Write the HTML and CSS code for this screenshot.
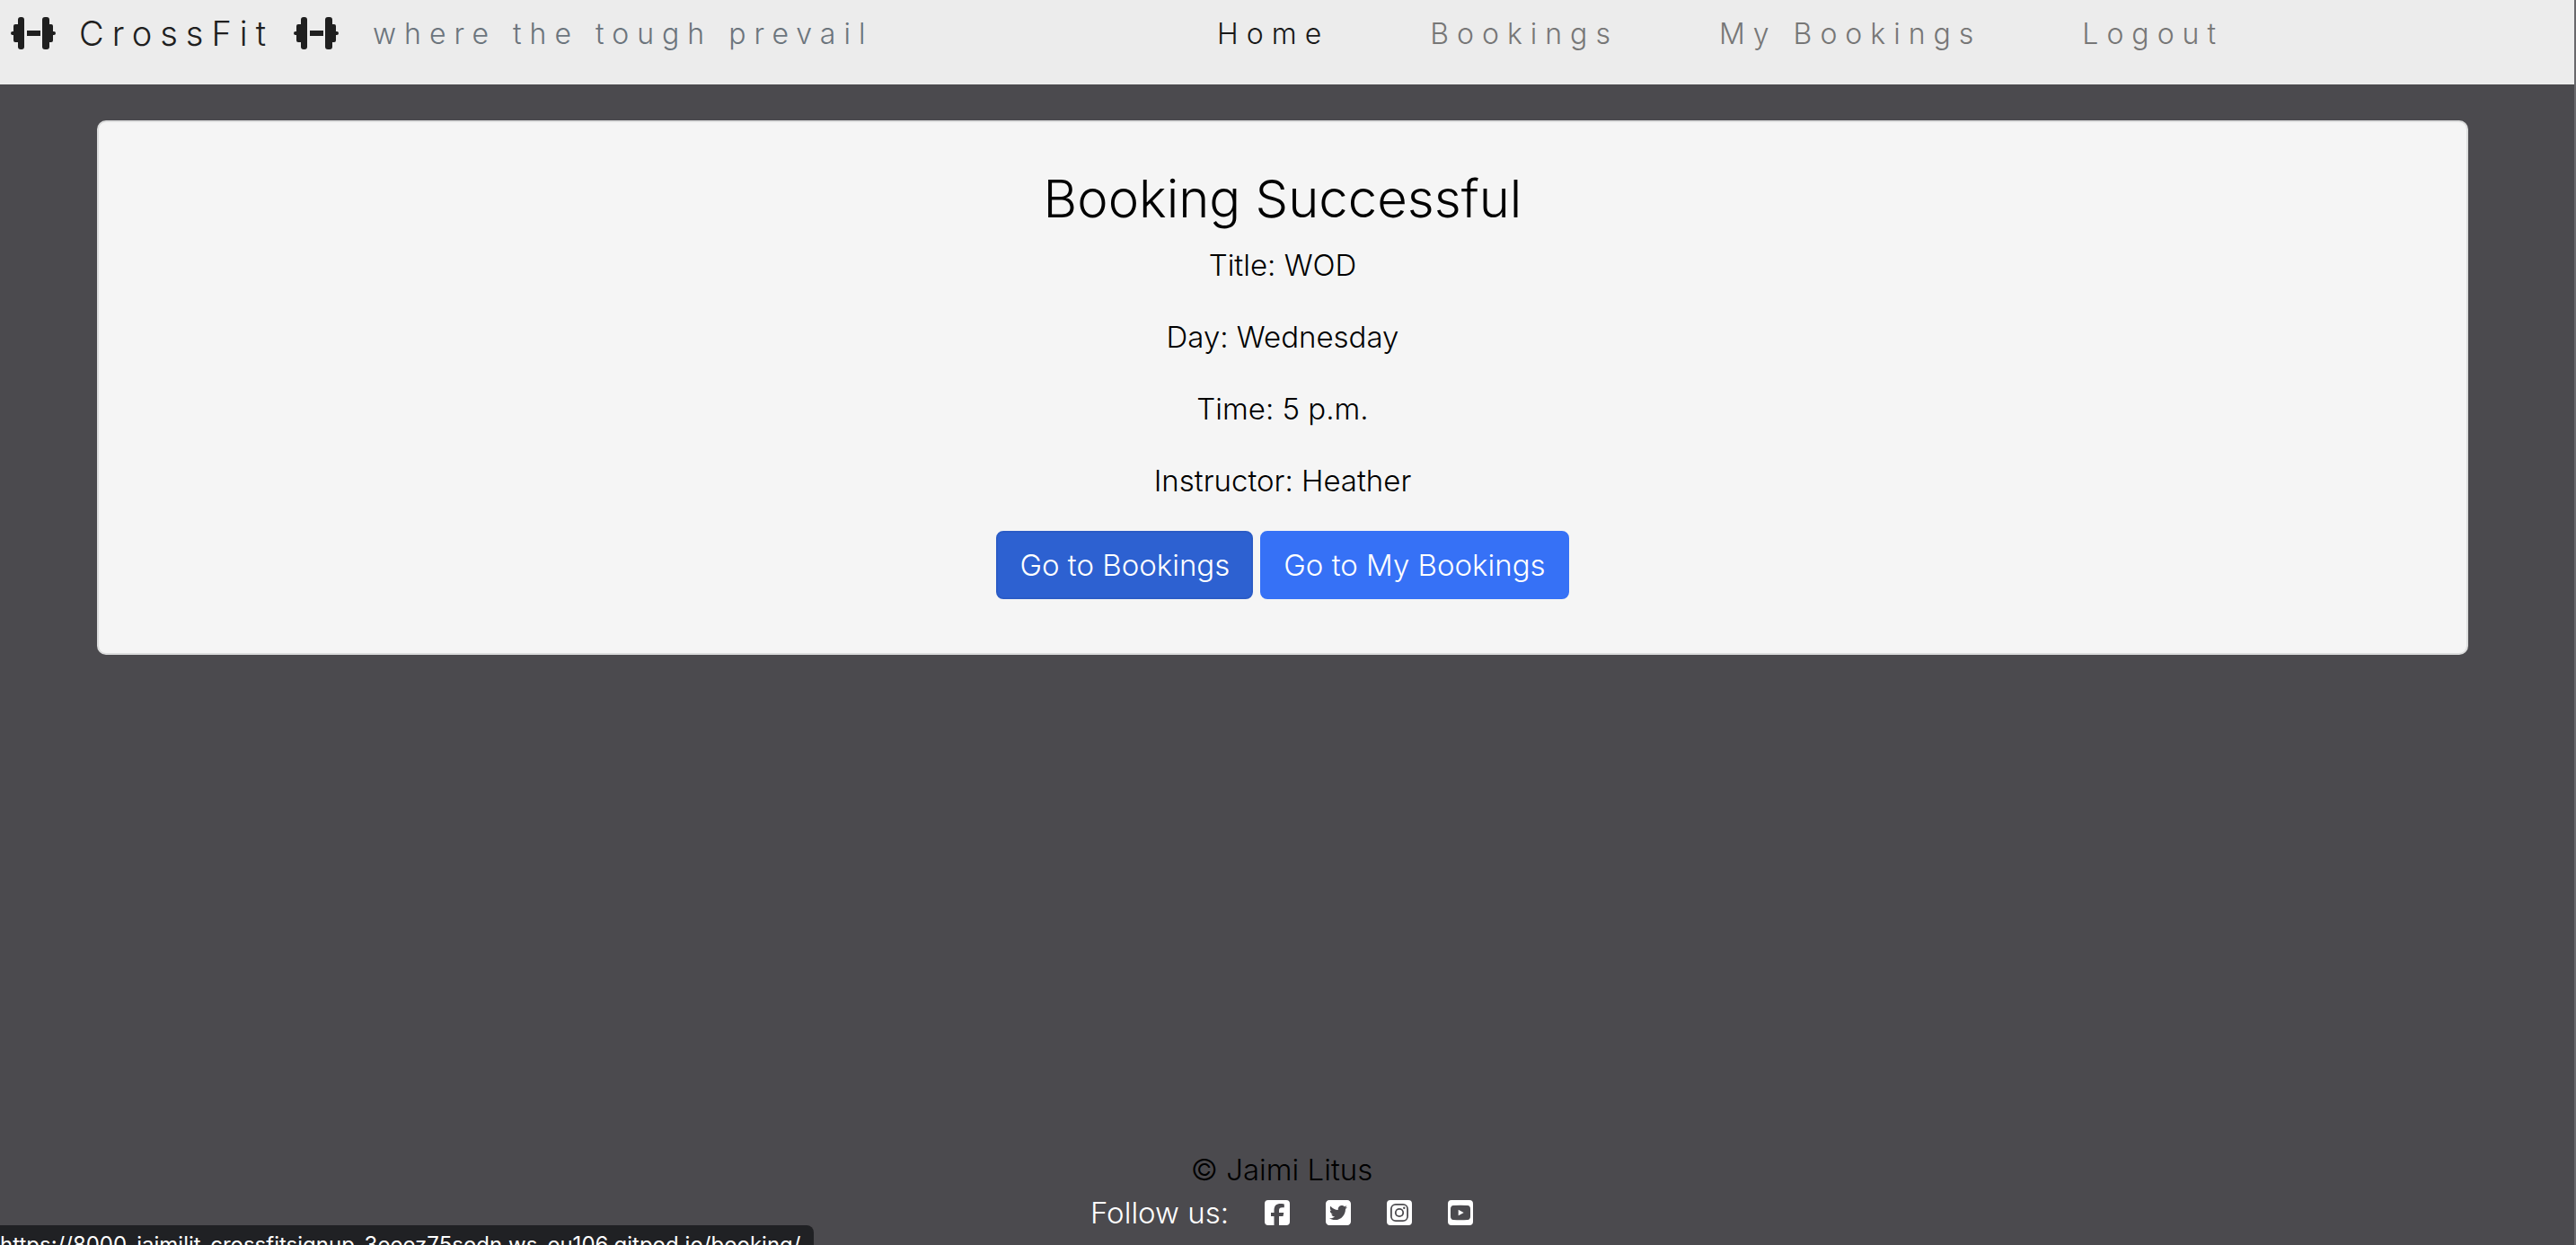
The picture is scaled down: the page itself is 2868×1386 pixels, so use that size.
FILE: index.html
```html
<!DOCTYPE html>
<html lang="en">
<head>
<meta charset="utf-8">
<title>CrossFit - Booking Successful</title>
<meta name="viewport" content="width=device-width, initial-scale=1">
<link rel="stylesheet" href="styles.css">
</head>
<body>
<svg width="0" height="0" class="sprite" aria-hidden="true">
  <symbol id="dumbbell" viewBox="0 0 50 36">
    <rect x="8" y="0" width="7" height="36" rx="3"/><rect x="35" y="0" width="8" height="36" rx="3"/>
    <path d="M3 10q0-2 2-2h5v20H5q-2 0-2-2v-6H2a2 2 0 0 1 0-4h1zM47 10q0-2-2-2h-5v20h5q2 0 2-2v-6h1a2 2 0 0 0 0-4h-1z"/>
    <rect x="18" y="15" width="15" height="6"/>
  </symbol>
</svg>
<header class="navbar">
  <a class="brand" href="#"><svg class="dumbbell"><use href="#dumbbell"/></svg><span class="brand-name">CrossFit</span><svg class="dumbbell"><use href="#dumbbell"/></svg></a>
  <span class="tagline">where the tough prevail</span>
  <nav class="links">
    <a class="link active" href="#">Home</a>
    <a class="link" href="#">Bookings</a>
    <a class="link" href="#">My Bookings</a>
    <a class="link" href="#">Logout</a>
  </nav>
</header>
<main class="content">
  <section class="card">
    <h1 class="title">Booking Successful</h1>
    <p class="detail">Title: WOD</p>
    <p class="detail">Day: Wednesday</p>
    <p class="detail">Time: 5 p.m.</p>
    <p class="detail">Instructor: Heather</p>
    <div class="actions">
      <button class="btn hovered" type="button">Go to Bookings</button>
      <button class="btn" type="button">Go to My Bookings</button>
    </div>
  </section>
</main>
<footer class="footer">
  <p class="copyright">© Jaimi Litus</p>
  <div class="follow">
    <span>Follow us:</span>
    <a class="social" href="#" aria-label="Facebook"><svg viewBox="0 0 28 28"><path fill-rule="evenodd" d="M4 0h20a4 4 0 0 1 4 4v20a4 4 0 0 1-4 4h-8V18h4.500l.8-4H16v-2.200c0-2.600 1-3.600 3.600-3.600h2.200V4.400C20 4 18.800 4 17.900 4 12.800 4 10.500 6.400 10.500 11.400V14H7v4h3.500v10H4a4 4 0 0 1-4-4V4a4 4 0 0 1 4-4z"/></svg></a>
    <a class="social" href="#" aria-label="Twitter"><svg viewBox="0 32 448 448"><path d="M64 32C28.700 32 0 60.700 0 96V416c0 35.300 28.700 64 64 64H384c35.300 0 64-28.700 64-64V96c0-35.300-28.700-64-64-64H64zM351.300 199.300c0 86.700-66 186.600-186.600 186.600c-37.200 0-71.700-10.800-100.700-29.400c5.300 .6 10.400 .8 15.800 .8c30.700 0 58.900-10.400 81.400-28c-28.800-.6-53-19.500-61.300-45.500c10.100 1.500 19.200 1.500 29.600-1.200c-30-6.100-52.500-32.500-52.500-64.400v-.8c8.700 4.900 18.900 7.900 29.600 8.300c-9-6-16.400-14.100-21.500-23.600s-7.800-20.200-7.700-31c0-12.200 3.200-23.400 8.900-33.100c32.300 39.800 80.800 65.800 135.200 68.600c-9.300-44.500 24-80.600 64-80.600c18.900 0 35.900 7.900 47.900 20.700c14.800-2.800 29-8.300 41.600-15.800c-4.900 15.200-15.200 28-28.800 36.100c13.200-1.400 26-5.100 37.800-10.200c-8.900 13.100-20.100 24.700-32.900 34c.2 2.800 .2 5.700 .2 8.500z"/></svg></a>
    <a class="social" href="#" aria-label="Instagram"><svg viewBox="0 0 28 28"><path fill-rule="evenodd" d="M4 0h20a4 4 0 0 1 4 4v20a4 4 0 0 1-4 4H4a4 4 0 0 1-4-4V4a4 4 0 0 1 4-4zM10 4a6 6 0 0 0-6 6v8a6 6 0 0 0 6 6h8a6 6 0 0 0 6-6v-8a6 6 0 0 0-6-6z"/><rect x="5.800" y="5.800" width="16.400" height="16.400" rx="4"/><circle class="cut" cx="14" cy="14" r="5.100"/><circle cx="14" cy="14" r="3.300"/><circle class="cut" cx="19.300" cy="8.700" r="1.200"/></svg></a>
    <a class="social" href="#" aria-label="YouTube"><svg viewBox="0 0 28 28"><path fill-rule="evenodd" d="M4 0h20a4 4 0 0 1 4 4v20a4 4 0 0 1-4 4H4a4 4 0 0 1-4-4V4a4 4 0 0 1 4-4zM6 6Q3 6.300 3 10v8q0 3.700 3 4 8 .6 16 0 3-.3 3-4v-8q0-3.700-3-4-8-.6-16 0z"/><path d="M11.700 10.700v6.600l6-3.300z"/></svg></a>
  </div>
</footer>
<div class="status">https://8000-jaimilit-crossfitsignup-3eeez75sodn.ws-eu106.gitpod.io/booking/</div>
</body>
</html>
```
FILE: styles.css
```css
* { box-sizing: border-box; }

body {
  margin: 0;
  min-height: 100vh;
  display: flex;
  flex-direction: column;
  overflow: hidden;
  background: #4b4a4e;
  border-right: 2px solid #69686c;
  color: #000;
  font: 300 33px/48px Inter, "Open Sans", sans-serif;
}

p, h1 { margin: 0; }
a { color: inherit; text-decoration: none; }
svg { display: block; fill: currentColor; }
.sprite { position: absolute; }

.navbar {
  display: flex;
  height: 94px;
  margin-right: -2px;
  padding: 14px 12px;
  align-items: flex-start;
  background: #ececec;
  font-size: 32px;
  letter-spacing: 9px;
}

.brand { display: flex; align-items: center; color: #1f1f1f; font-size: 38px; height: 46px; }
.brand-name { margin: 0 22px 0 26px; }
.dumbbell { width: 50px; height: 36px; }
.tagline { margin-left: 38px; color: #6c757d; }
.links { display: flex; gap: 112px; margin-left: auto; margin-right: 380px; }
.link { color: #777; }
.link.active { color: #191919; }

.content { padding: 40px 118px 0 108px; }
.card {
  padding: 50px 32px 60px;
  border: 2px solid #dcdddd;
  border-radius: 10px;
  background: #f5f5f5;
  text-align: center;
}
.title { margin-bottom: 15px; font-size: 58px; font-weight: 300; line-height: 70px; }
.detail { margin-bottom: 32px; }
.actions { display: flex; justify-content: center; gap: 8px; }
.btn {
  padding: 12px 24px;
  border: 2px solid #3671f6;
  border-radius: 8px;
  background: #3671f6;
  color: #fff;
  font: inherit;
}
.btn.hovered { background: #2d61d1; border-color: #2b5cc6; }

.footer {
  margin-top: auto;
  padding: 0 12px 12px 0;
  text-align: center;
}
.follow { display: flex; justify-content: center; align-items: center; gap: 40px; color: #fff; }
.social { width: 28px; height: 28px; color: #fff; }
.social .cut { fill: #4b4a4e; }

.status {
  position: fixed;
  left: 0;
  bottom: 0;
  width: 906px;
  height: 22px;
  overflow: hidden;
  padding-top: 6px;
  border-radius: 0 8px 0 0;
  background: #202124;
  color: #fff;
  font-size: 24px;
  font-weight: 400;
  line-height: 32px;
  white-space: nowrap;
}
```
